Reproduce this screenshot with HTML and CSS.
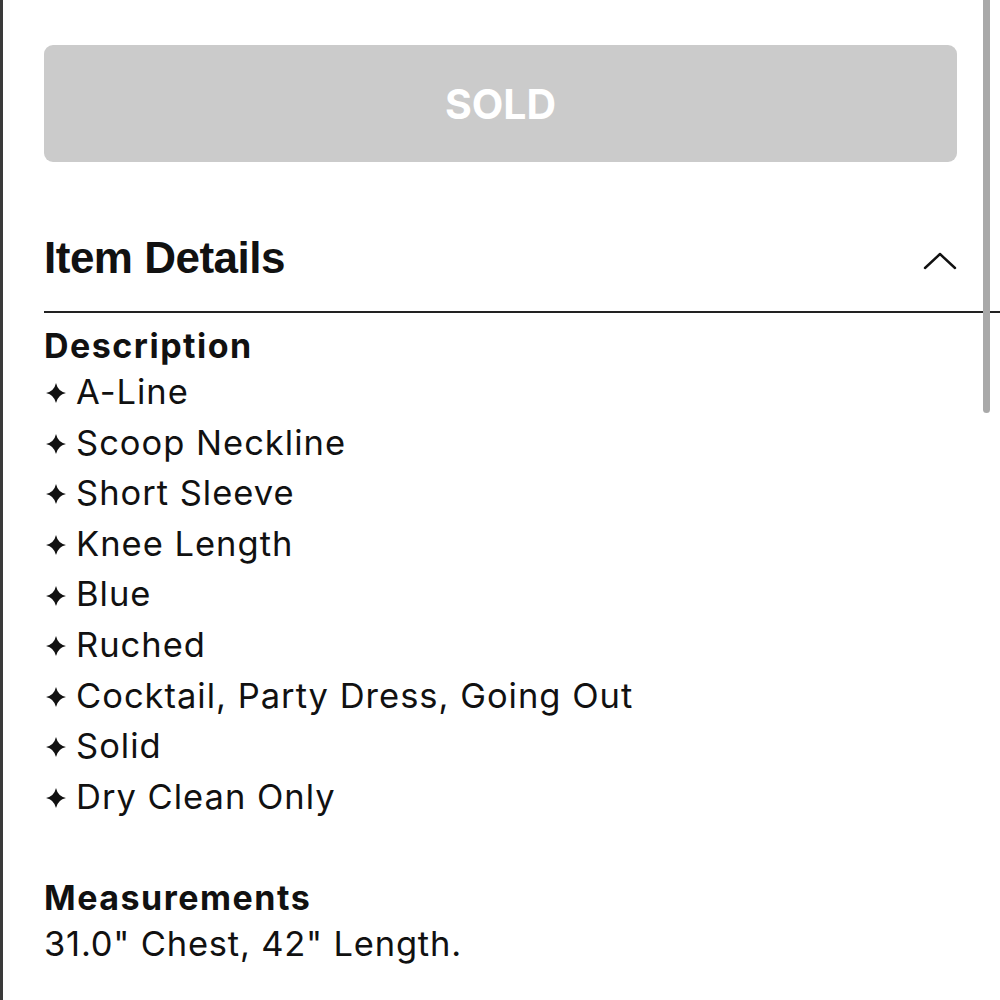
FILE: index.html
```html
<!DOCTYPE html>
<html lang="en">
<head>
    <meta charset="UTF-8">
    <meta name="viewport" content="width=device-width, initial-scale=1.0">
    <title>Item Details</title>
    <link rel="stylesheet" href="styles.css">
</head>
<body>
    <div class="page">
        <div class="scrollbar"></div>
        <div class="content">
            <button class="sold-button" disabled>SOLD</button>

            <div class="details-header">
                <h2>Item Details</h2>
                <svg class="chevron" width="34" height="20" viewBox="0 0 34 20">
                    <polyline points="2,18 17,4 32,18" fill="none" stroke="#111" stroke-width="2.4" stroke-linecap="round" stroke-linejoin="round"/>
                </svg>
            </div>
            <div class="divider"></div>

            <div class="section">
                <h3>Description</h3>
                <ul class="features">
                    <li><svg class="star" viewBox="0 0 20 20"><path d="M10 0 Q11.8 8.2 20 10 Q11.8 11.8 10 20 Q8.2 11.8 0 10 Q8.2 8.2 10 0Z"/></svg>A-Line</li>
                    <li><svg class="star" viewBox="0 0 20 20"><path d="M10 0 Q11.8 8.2 20 10 Q11.8 11.8 10 20 Q8.2 11.8 0 10 Q8.2 8.2 10 0Z"/></svg>Scoop Neckline</li>
                    <li><svg class="star" viewBox="0 0 20 20"><path d="M10 0 Q11.8 8.2 20 10 Q11.8 11.8 10 20 Q8.2 11.8 0 10 Q8.2 8.2 10 0Z"/></svg>Short Sleeve</li>
                    <li><svg class="star" viewBox="0 0 20 20"><path d="M10 0 Q11.8 8.2 20 10 Q11.8 11.8 10 20 Q8.2 11.8 0 10 Q8.2 8.2 10 0Z"/></svg>Knee Length</li>
                    <li><svg class="star" viewBox="0 0 20 20"><path d="M10 0 Q11.8 8.2 20 10 Q11.8 11.8 10 20 Q8.2 11.8 0 10 Q8.2 8.2 10 0Z"/></svg>Blue</li>
                    <li><svg class="star" viewBox="0 0 20 20"><path d="M10 0 Q11.8 8.2 20 10 Q11.8 11.8 10 20 Q8.2 11.8 0 10 Q8.2 8.2 10 0Z"/></svg>Ruched</li>
                    <li><svg class="star" viewBox="0 0 20 20"><path d="M10 0 Q11.8 8.2 20 10 Q11.8 11.8 10 20 Q8.2 11.8 0 10 Q8.2 8.2 10 0Z"/></svg>Cocktail, Party Dress, Going Out</li>
                    <li><svg class="star" viewBox="0 0 20 20"><path d="M10 0 Q11.8 8.2 20 10 Q11.8 11.8 10 20 Q8.2 11.8 0 10 Q8.2 8.2 10 0Z"/></svg>Solid</li>
                    <li><svg class="star" viewBox="0 0 20 20"><path d="M10 0 Q11.8 8.2 20 10 Q11.8 11.8 10 20 Q8.2 11.8 0 10 Q8.2 8.2 10 0Z"/></svg>Dry Clean Only</li>
                </ul>
            </div>

            <div class="section measurements">
                <h3>Measurements</h3>
                <p>31.0" Chest, 42" Length.</p>
            </div>
        </div>
    </div>
</body>
</html>
```

FILE: styles.css
```css
body {
    margin: 0;
    padding: 0;
    background: #fff;
    color: #111;
    font-family: Inter, "Noto Sans", sans-serif;
}
.page {
    position: relative;
    height: 1000px;
    border-left: 3px solid #3a3a3a;
    overflow: hidden;
}
/* iOS style scroll indicator over the right edge */
.scrollbar {
    position: absolute;
    top: -6px;
    right: 10px;
    width: 7px;
    height: 419px;
    border-radius: 4px;
    background: #a9a9a9;
}
.content {
    padding: 45px 43px 0 41px;
}
.sold-button {
    display: block;
    width: 100%;
    height: 117px;
    border: none;
    border-radius: 9px;
    background: #cbcbcb;
    color: #fff;
    font-family: Inter, sans-serif;
    font-size: 41px;
    font-weight: 700;
}
.details-header {
    display: flex;
    align-items: center;
    justify-content: space-between;
    margin-top: 71px;
}
.details-header h2 {
    margin: 0;
    font-family: "Liberation Sans", Arial, sans-serif;
    font-size: 44px;
    font-weight: 700;
    letter-spacing: -0.5px;
    line-height: 50px;
}
.chevron {
    margin-top: 4px;
}
.divider {
    height: 2px;
    background: #222;
    margin: 28px -43px 0 0;
}
.section {
    margin-top: 12px;
}
.section h3 {
    margin: 0;
    font-size: 34px;
    font-weight: 700;
    letter-spacing: 1.5px;
    line-height: 42px;
}
.features {
    list-style: none;
    margin: 0;
    padding: 0;
}
.features li {
    font-size: 34.5px;
    letter-spacing: 1px;
    line-height: 50.6px;
    display: flex;
    align-items: center;
}
.star {
    width: 20px;
    height: 20px;
    margin: 2px 10px 0 2px;
    fill: #111;
    flex-shrink: 0;
}
.measurements {
    margin-top: 55px;
}
.measurements p {
    margin: 0;
    font-size: 34.5px;
    letter-spacing: 0.8px;
    line-height: 50px;
}
```
